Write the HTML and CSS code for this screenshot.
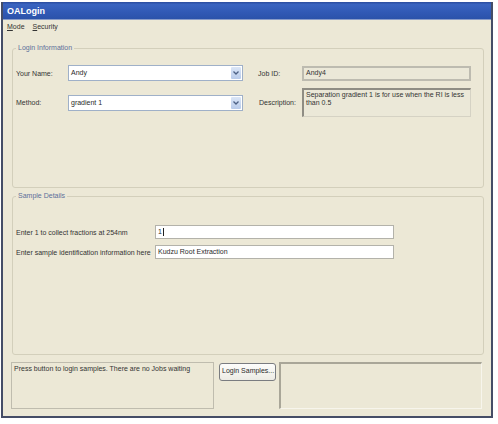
FILE: index.html
```html
<!DOCTYPE html>
<html>
<head>
<meta charset="utf-8">
<link rel="stylesheet" href="styles.css">
</head>
<body>
<div class="window">
  <div class="titlebar">OALogin</div>
  <div class="menubar"><span class="menu"><u>M</u>ode</span><span class="menu"><u>S</u>ecurity</span></div>
  <div class="main">
    <fieldset class="group login">
      <legend>Login Information</legend>
      <div class="login-grid">
        <div class="lbl">Your Name:</div>
        <div class="combo"><span class="val">Andy</span><span class="drop"><svg width="6" height="4" viewBox="0 0 6 4"><path d="M0.5 0.5 L3 3 L5.5 0.5" fill="none" stroke="#4d6185" stroke-width="1.3"/></svg></span></div>
        <div class="lbl rl">Job ID:</div>
        <div class="ro jobid">Andy4</div>
        <div class="lbl">Method:</div>
        <div class="combo"><span class="val">gradient 1</span><span class="drop"><svg width="6" height="4" viewBox="0 0 6 4"><path d="M0.5 0.5 L3 3 L5.5 0.5" fill="none" stroke="#4d6185" stroke-width="1.3"/></svg></span></div>
        <div class="lbl rl desc-lbl">Description:</div>
        <div class="ro desc">Separation gradient 1 is for use when the RI is less than 0.5</div>
      </div>
    </fieldset>
    <fieldset class="group sample">
      <legend>Sample Details</legend>
      <div class="sample-rows">
        <div class="srow"><div class="slbl">Enter 1 to collect fractions at 254nm</div><div class="input">1<span class="caret"></span></div></div>
        <div class="srow"><div class="slbl">Enter sample identification information here</div><div class="input">Kudzu Root Extraction</div></div>
      </div>
    </fieldset>
    <div class="bottom">
      <div class="status">Press button to login samples. There are no Jobs waiting</div>
      <div class="btn">Login Samples...</div>
      <div class="panel"></div>
    </div>
  </div>
</div>
</body>
</html>
```
FILE: styles.css
```css
html, body { margin: 0; padding: 0; background: #ffffff; }
body { font-family: "Liberation Sans", Arial, sans-serif; font-size: 7px; color: #2a2a2a; }
.window {
  margin: 2px 0 0 1px;
  width: 492px;
  height: 416px;
  box-sizing: border-box;
  border: 2px solid #454d66;
  border-top: 0;
  background: #ece8d6;
  display: flex;
  flex-direction: column;
}
.titlebar {
  height: 18px;
  background: linear-gradient(#2a4c9e 0, #3a64c0 15%, #3159b5 60%, #2b52aa 100%);
  color: #ffffff;
  font-weight: bold;
  font-size: 9px;
  line-height: 18px;
  padding-left: 4px;
  border-bottom: 1px solid #8a9cc8;
  box-sizing: border-box;
}
.menubar {
  height: 13px;
  line-height: 14px;
  padding-left: 4px;
  display: flex;
  gap: 8px;
  color: #333;
}
.menu u { text-decoration: underline; }
.main { flex: 1; display: flex; flex-direction: column; padding: 11px 6px 6px 8px; }
.group {
  margin: 0;
  padding: 0;
  border: 1px solid #d3cfbb;
  border-radius: 3px;
  width: 472px;
  box-sizing: border-box;
  margin-left: 1px;
}
.group legend {
  color: #5d6f9a;
  padding: 0 2px;
  margin-left: 3px;
  font-size: 7px;
  line-height: 8px;
}
.login { height: 144px; }
.login-grid {
  display: grid;
  grid-template-columns: 52px 175px 59px 169px;
  grid-template-rows: 16px 29px;
  row-gap: 7px;
  align-items: center;
  margin-top: 13px;
  padding-left: 3px;
}
.lbl { color: #333; }
.rl { padding-left: 15px; }
.desc-lbl { padding-left: 16px; }
.combo {
  height: 16px;
  box-sizing: border-box;
  border: 1px solid #9fb0c8;
  background: #ffffff;
  display: flex;
  align-items: stretch;
}
.combo .val { flex: 1; padding-left: 2px; line-height: 13px; }
.combo .drop {
  width: 10px;
  margin: 1px;
  background: linear-gradient(#dbe6f7, #b8cbea);
  border-radius: 1px;
  display: flex;
  align-items: center;
  justify-content: center;
}
.ro {
  box-sizing: border-box;
  background: #ebe8d8;
  border: 2px solid #b9b8ae;
  color: #333;
}
.jobid { height: 15px; line-height: 10px; padding-left: 2px; border-color: #bdbbb0; }
.desc {
  height: 29px;
  padding: 1px 3px 0 2px;
  line-height: 8px;
  border-top-color: #8f8d84;
  border-left-color: #8f8d84;
  border-right: 1px solid #d5d2c4;
  border-bottom: 1px solid #d5d2c4;
}
.sample { height: 163px; margin-top: 4px; }
.sample-rows {
  display: flex;
  flex-direction: column;
  gap: 6px;
  margin-top: 25px;
  padding-left: 3px;
}
.srow { display: flex; align-items: center; }
.slbl { width: 139px; color: #333; }
.input {
  width: 239px;
  height: 14px;
  box-sizing: border-box;
  border: 1px solid #b3b2aa;
  background: #ffffff;
  padding-left: 2px;
  line-height: 12px;
  display: flex;
  align-items: center;
}
.caret { display: inline-block; width: 1px; height: 8px; background: #222; margin-left: 1px; }
.bottom {
  display: flex;
  margin-top: 7px;
  align-items: flex-start;
}
.status {
  width: 203px;
  height: 47px;
  box-sizing: border-box;
  border: 1px solid #bfbcae;
  padding: 1px 2px;
  line-height: 9px;
  color: #333;
}
.btn {
  width: 57px;
  height: 18px;
  box-sizing: border-box;
  margin: 1px 3px 0 5px;
  border: 1px solid #7a7c80;
  border-radius: 3px;
  background: linear-gradient(#fdfdfb, #ecebe4);
  line-height: 14px;
  padding-left: 2px;
  white-space: nowrap;
  overflow: hidden;
}
.panel {
  width: 203px;
  height: 47px;
  box-sizing: border-box;
  border-top: 2px solid #a9a698;
  border-left: 2px solid #a9a698;
  border-right: 1px solid #f7f5ec;
  border-bottom: 1px solid #f7f5ec;
}
```
